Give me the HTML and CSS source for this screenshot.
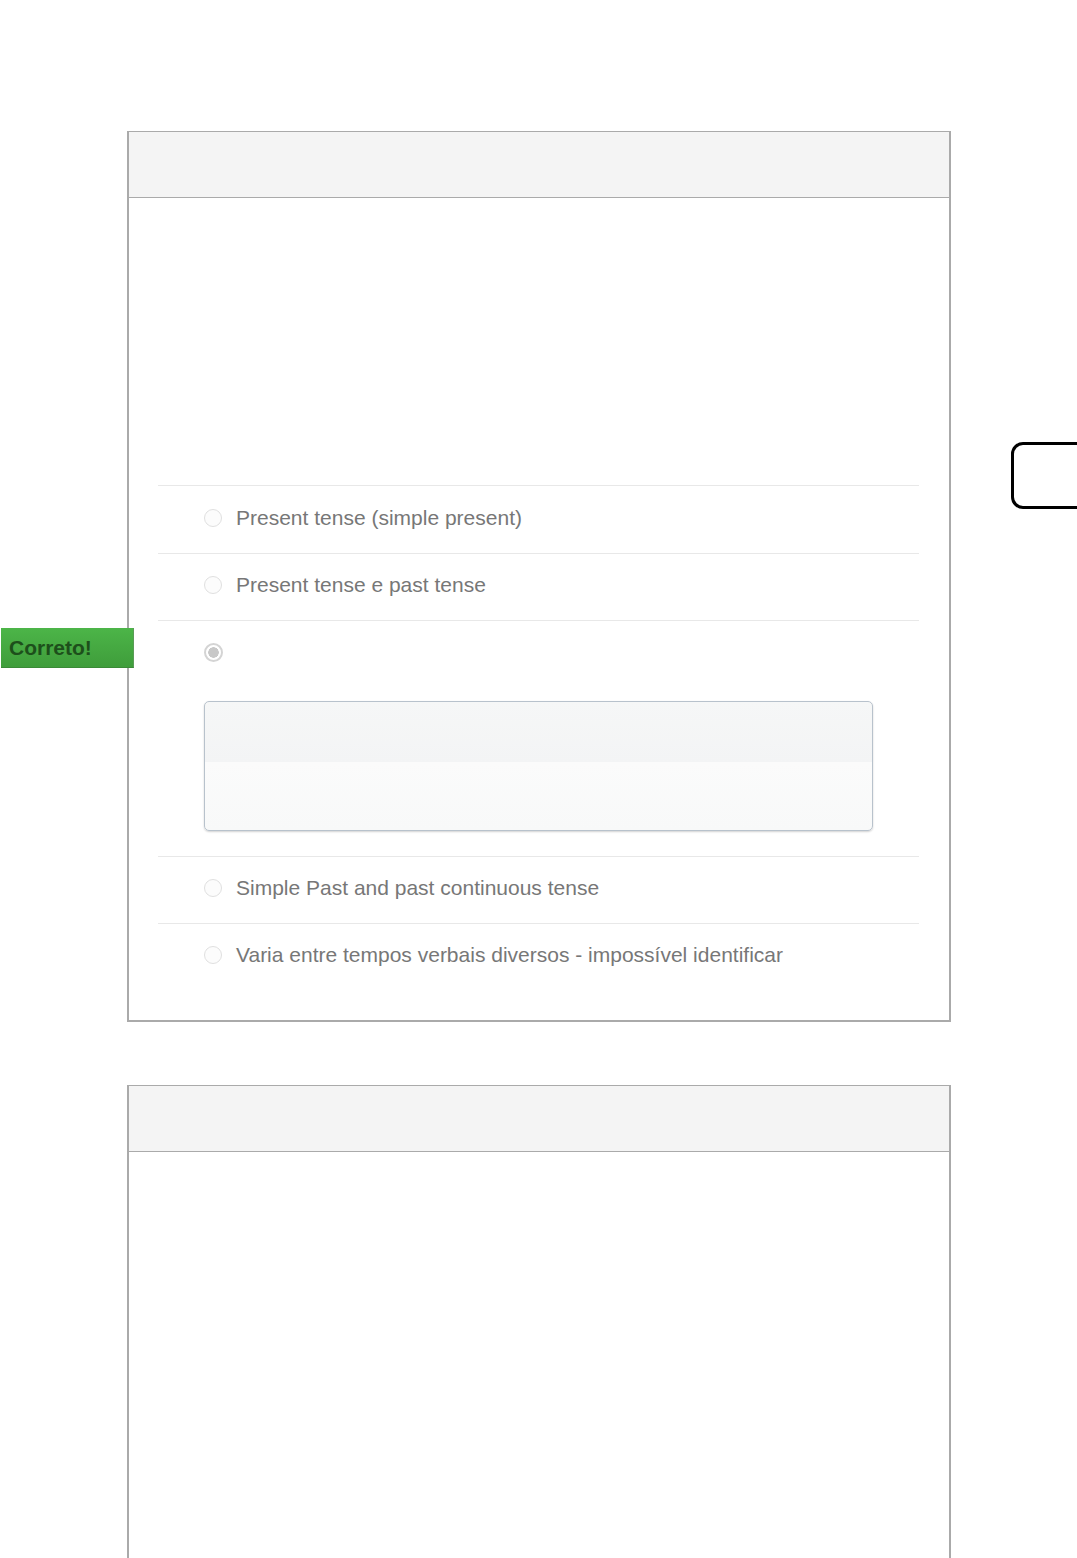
FILE: index.html
```html
<!DOCTYPE html>
<html lang="pt">
<head>
  <meta charset="UTF-8" />
  <meta name="viewport" content="width=device-width, initial-scale=1.0" />
  <title>Quiz</title>
  <link rel="stylesheet" href="styles.css">
</head>
<body>
  <div class="nav-tab"></div>

  <section class="question">
    <div class="q-header"></div>
    <div class="q-body">
      <div class="q-text"></div>
      <ul class="answers">
        <li class="answer">
          <span class="radio"></span>
          <span class="label">Present tense (simple present)</span>
        </li>
        <li class="answer">
          <span class="radio"></span>
          <span class="label">Present tense e past tense</span>
        </li>
        <li class="answer answer--chosen">
          <span class="flag">Correto!</span>
          <div class="answer-line">
            <span class="radio radio--checked"></span>
            <span class="label"></span>
          </div>
          <div class="comment"></div>
        </li>
        <li class="answer">
          <span class="radio"></span>
          <span class="label">Simple Past and past continuous tense</span>
        </li>
        <li class="answer">
          <span class="radio"></span>
          <span class="label">Varia entre tempos verbais diversos - impossível identificar</span>
        </li>
      </ul>
    </div>
  </section>

  <section class="question question--open">
    <div class="q-header"></div>
    <div class="q-body"></div>
  </section>
</body>
</html>
```

FILE: styles.css
```css
html, body { margin: 0; padding: 0; }
body {
  font-family: "Liberation Sans", Arial, sans-serif;
  background: #fff;
  color: #777;
  padding-top: 131px;
  height: 1558px;
  box-sizing: border-box;
  overflow: hidden;
  position: relative;
}

.nav-tab {
  position: absolute; left: 1011px; top: 442px;
  width: 90px; height: 61px;
  border: 3px solid #000; border-radius: 12px;
}

.question {
  margin-left: 127px; width: 824px; box-sizing: border-box;
  border: 2px solid #aaa; border-top-width: 1px;
  position: relative;
}
.question + .question { margin-top: 63px; }

.q-header {
  height: 65px; background: #f4f4f4;
  border-bottom: 1px solid #aaa;
}

.q-body { padding: 0 30px 30px 29px; }
.q-text { height: 287px; }

.answers { list-style: none; margin: 0; padding: 0; }
.answer {
  display: flex; align-items: center; gap: 14px;
  height: 62px; padding: 0 46px 4px;
  border-top: 1px solid #e8e8e8;
  font-size: 21px;
  position: relative;
}
.answer:first-child { height: 63px; }
.answer--chosen {
  display: block; height: auto;
  padding-top: 21px; padding-bottom: 25px;
}
.answer-line { display: flex; align-items: center; gap: 14px; height: 20px; }

.radio {
  width: 18px; height: 18px; flex: none;
  border: 1px solid #e0e0e0; border-radius: 50%;
  background: #fcfcfc; box-sizing: border-box;
}
.radio--checked {
  border: 2px solid #d4d4d4;
  background: radial-gradient(circle, #c8c8c8 0 5px, #fff 5.5px);
  width: 19px; height: 19px;
}

.flag {
  position: absolute; left: -157px; top: 7px;
  width: 133px; height: 40px; box-sizing: border-box;
  padding-left: 8px; line-height: 40px;
  background: linear-gradient(#4cb548, #3f9d3b);
  border-bottom: 1px solid #3a8a37; border-right: 1px solid #5a9c56;
  color: #1d4f1b; font-weight: bold; font-size: 21px;
}

.comment {
  margin-top: 39px; height: 130px; box-sizing: border-box;
  border: 1px solid #b8c2cc; border-radius: 5px;
  background: linear-gradient(#f6f7f7 0, #f3f4f5 47%, #fbfbfb 47%, #f8f9f9 100%);
  box-shadow: 0 1px 2px rgba(0,0,0,.18);
}

.question--open { border-bottom: none; }
.question--open .q-body { height: 600px; }
```
